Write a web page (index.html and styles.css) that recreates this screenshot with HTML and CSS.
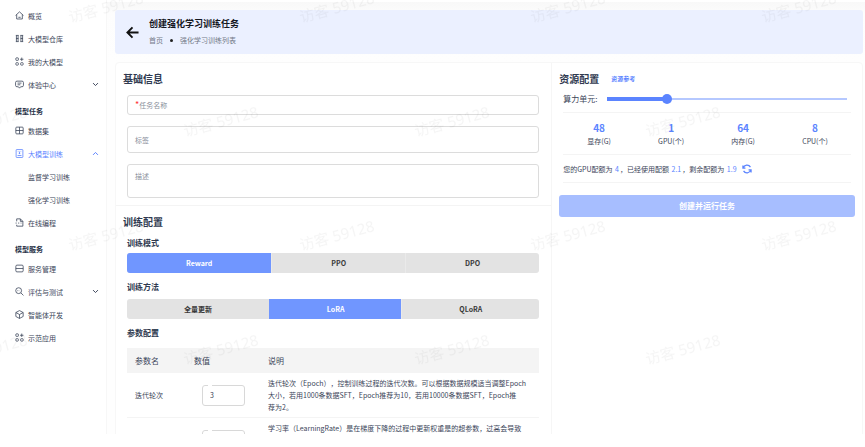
FILE: index.html
```html
<!DOCTYPE html>
<html lang="zh-CN">

<head>
  <meta charset="UTF-8">
  <meta name="viewport" content="width=device-width, initial-scale=1.0">
  <title>创建强化学习训练任务</title>
  <link rel="stylesheet" href="styles.css">
</head>

<body>
  <div class="app">
    <nav class="sidebar">
      <a class="nav-item" href="#">
        <svg class="icon" viewBox="0 0 16 16"><path d="M1 8 8 1.500l7 6.500M3 6.500V14.200h10V6.500M6 11.200h4"/></svg>
        <span>概览</span>
      </a>
      <a class="nav-item" href="#">
        <svg class="icon" viewBox="0 0 16 16"><path d="M1.500 2.500h5M1.500 13.500h5M9.500 2.500h5M9.500 13.500h5M2 8h4M10 8h4M2.500 2.500v11M5.500 2.500v11M10.500 2.500v11M13.500 2.500v11"/></svg>
        <span>大模型仓库</span>
      </a>
      <a class="nav-item" href="#">
        <svg class="icon" viewBox="0 0 16 16"><rect x="1.500" y="1.500" width="4.500" height="4.500" rx="1"/><rect x="1.500" y="10" width="4.500" height="4.500" rx="1.500"/><rect x="10" y="10" width="4.500" height="4.500" rx="1.500"/><path d="M12 1v6M9 4h6"/></svg>
        <span>我的大模型</span>
      </a>
      <a class="nav-item" href="#">
        <svg class="icon" viewBox="0 0 16 16"><path d="M3.500 2h9A2.500 2.500 0 0 1 15 4.500v5a2.500 2.500 0 0 1-2.500 2.500H10l-2 2.500L6 12H3.500A2.500 2.500 0 0 1 1 9.500v-5A2.500 2.500 0 0 1 3.500 2zM4.500 5.500h7M4.500 8.500h5"/></svg>
        <span>体验中心</span>
        <svg class="chevron" viewBox="0 0 10 10"><path d="M1.500 3 5 6.500 8.500 3"/></svg>
      </a>

      <div class="nav-group">模型任务</div>
      <a class="nav-item" href="#">
        <svg class="icon" viewBox="0 0 16 16"><rect x="1.500" y="2" width="13" height="12" rx="1.500"/><path d="M8 2v12M1.500 8h13"/></svg>
        <span>数据集</span>
      </a>
      <a class="nav-item active" href="#">
        <svg class="icon" viewBox="0 0 16 16"><rect x="2" y="1" width="12" height="14" rx="1"/><path d="M5 4.500h1M10 4.500h1M8 4.500v4M6.500 7 8 8.500 9.500 7M4.500 11.500h7"/></svg>
        <span>大模型训练</span>
        <svg class="chevron" viewBox="0 0 10 10"><path d="M1.500 7 5 3.500 8.500 7"/></svg>
      </a>
      <a class="nav-item sub" href="#">监督学习训练</a>
      <a class="nav-item sub" href="#">强化学习训练</a>
      <a class="nav-item" href="#">
        <svg class="icon" viewBox="0 0 16 16"><path d="M3 6V1.500h6.500L14 6v8.500H3V12M9.500 1.500V6H14M1 9h2M5.500 9h2M10 9h1.500"/></svg>
        <span>在线编程</span>
      </a>

      <div class="nav-group">模型服务</div>
      <a class="nav-item" href="#">
        <svg class="icon" viewBox="0 0 16 16"><rect x="1.500" y="2" width="13" height="12" rx="2"/><path d="M1.500 8h13"/></svg>
        <span>服务管理</span>
      </a>
      <a class="nav-item" href="#">
        <svg class="icon" viewBox="0 0 16 16"><circle cx="6.500" cy="6.500" r="5.200"/><path d="m10.500 10.500 4.500 4.500M4 6.500h1M6.500 6.500h.5M8.500 6.500h.5"/></svg>
        <span>评估与测试</span>
        <svg class="chevron" viewBox="0 0 10 10"><path d="M1.500 3 5 6.500 8.500 3"/></svg>
      </a>
      <a class="nav-item" href="#">
        <svg class="icon" viewBox="0 0 16 16"><path d="m8 1 6.500 3.500v7L8 15l-6.500-3.500v-7zM1.500 4.500 8 8l6.500-3.500M8 8v7"/></svg>
        <span>智能体开发</span>
      </a>
      <a class="nav-item" href="#">
        <svg class="icon" viewBox="0 0 16 16"><rect x="1.500" y="1.500" width="4.500" height="4.500" rx="1"/><rect x="1.500" y="10" width="4.500" height="4.500" rx="1.500"/><rect x="10" y="10" width="4.500" height="4.500" rx="1.500"/><path d="M12 1v6M9 4h6"/></svg>
        <span>示范应用</span>
      </a>
    </nav>

    <main class="main">
      <header class="page-header">
        <a class="back" href="#" aria-label="返回">
          <svg viewBox="0 0 14 14"><path d="M13.500 7H1.500M7 1.500 1.500 7 7 12.500"/></svg>
        </a>
        <div>
          <h1>创建强化学习训练任务</h1>
          <div class="breadcrumb">
            <a href="#">首页</a>
            <span class="dot"></span>
            <a href="#">强化学习训练列表</a>
          </div>
        </div>
      </header>

      <div class="content">
        <form class="column">
          <section class="section">
            <h2>基础信息</h2>
            <div class="fields">
              <div class="field">
                <label for="taskName"><span class="required">*</span>任务名称</label>
                <input type="text" id="taskName" required>
              </div>
              <div class="field tall">
                <label for="tag">标签</label>
                <input type="text" id="tag">
              </div>
              <div class="field area">
                <label for="desc">描述</label>
                <textarea id="desc"></textarea>
              </div>
            </div>
          </section>

          <section class="section">
            <h2>训练配置</h2>
            <h3>训练模式</h3>
            <div class="segmented">
              <button type="button" class="selected">Reward</button>
              <button type="button">PPO</button>
              <button type="button">DPO</button>
            </div>
            <h3>训练方法</h3>
            <div class="segmented">
              <button type="button">全量更新</button>
              <button type="button" class="selected">LoRA</button>
              <button type="button">QLoRA</button>
            </div>
            <h3>参数配置</h3>
            <table class="params">
              <thead>
                <tr>
                  <th class="col-name">参数名</th>
                  <th class="col-value">数值</th>
                  <th>说明</th>
                </tr>
              </thead>
              <tbody>
                <tr>
                  <td><label for="epoch">迭代轮次</label></td>
                  <td>
                    <fieldset class="outlined">
                      <legend></legend>
                      <input type="text" id="epoch" value="3">
                    </fieldset>
                  </td>
                  <td>迭代轮次（Epoch），控制训练过程的迭代次数。可以根据数据规模适当调整Epoch<br>大小，若用1000条数据SFT，Epoch推荐为10，若用10000条数据SFT，Epoch推<br>荐为2。</td>
                </tr>
                <tr>
                  <td><label for="lr">学习率</label></td>
                  <td>
                    <fieldset class="outlined">
                      <legend></legend>
                      <input type="text" id="lr" value="0.0001">
                    </fieldset>
                  </td>
                  <td>学习率（LearningRate）是在梯度下降的过程中更新权重是的超参数，过高会导致<br>模型难以收敛，过低则会导致模型收敛速度过慢，平台已给出默认推荐值，<br>可根据经验进行调整。</td>
                </tr>
              </tbody>
            </table>
          </section>
        </form>

        <aside class="column resources">
          <div class="resource-title">
            <h2>资源配置</h2>
            <a href="#">资源参考</a>
          </div>
          <div class="resource-body">
            <div class="slider-row">
              <label for="units">算力单元:</label>
              <input type="range" id="units" min="0" max="100" value="24">
            </div>
            <div class="stats">
              <div><strong>48</strong><span>显存(G)</span></div>
              <div><strong>1</strong><span>GPU(个)</span></div>
              <div><strong>64</strong><span>内存(G)</span></div>
              <div><strong>8</strong><span>CPU(个)</span></div>
            </div>
            <div class="quota">
              <span>您的GPU配额为 <b>4</b>，已经使用配额 <b>2.1</b>，剩余配额为 <b>1.9</b></span>
              <button type="button" class="refresh" aria-label="刷新">
                <svg viewBox="0 0 16 16"><path d="M2 6.500A6.300 6.300 0 0 1 13.500 5M14 9.500A6.300 6.300 0 0 1 2.500 11M1.500 2.500v4.200h4M14.500 13.500V9.300h-4"/></svg>
              </button>
            </div>
          </div>
          <button type="button" class="submit">创建并运行任务</button>
        </aside>
      </div>
    </main>

    <svg class="watermark" aria-hidden="true">
      <defs>
        <pattern id="mark" width="231" height="228" patternUnits="userSpaceOnUse" x="-10" y="-49">
          <text x="116" y="62" transform="rotate(-15 116 57)">访客 59128</text>
          <text x="0" y="176" transform="rotate(-15 0 171)">访客 59128</text>
          <text x="231" y="176" transform="rotate(-15 231 171)">访客 59128</text>
        </pattern>
      </defs>
      <rect width="100%" height="100%" fill="url(#mark)"/>
    </svg>
  </div>
</body>

</html>
```
FILE: styles.css
```css
* {
  box-sizing: border-box;
}

body {
  margin: 0;
  font-family: "Noto Sans CJK SC", sans-serif;
  font-size: 7px;
  line-height: 12px;
  text-spacing-trim: space-all;
  color: #3b4559;
  background-color: #fff;
}

h1, h2, h3 {
  margin: 0;
}

a {
  color: inherit;
  text-decoration: none;
}

button,
input,
textarea {
  font: inherit;
  color: inherit;
}

.app {
  position: relative;
  display: flex;
  height: calc(100vh - 13px);
  overflow: hidden;
}

/* sidebar */
.sidebar {
  width: 107px;
  flex: none;
  padding-top: 4px;
  border-right: 1px solid #f7f7f7;
}

.nav-item {
  display: flex;
  align-items: center;
  gap: 4px;
  height: 23px;
  padding: 0 7px 0 15px;
}

.nav-item.sub {
  padding-left: 28px;
}

.nav-item.active {
  color: #5b82ff;
}

.nav-group {
  height: 23px;
  padding: 9px 0 0 15px;
  font-weight: bold;
  color: #273248;
}

.icon {
  width: 9px;
  height: 9px;
}

.icon,
.chevron {
  fill: none;
  stroke: currentColor;
  stroke-width: 1.4;
}

.chevron {
  width: 7px;
  height: 7px;
  margin-left: auto;
}

/* page */
.main {
  flex: 1;
  min-width: 0;
  padding: 8px 2px 0 8px;
  border-top: 2px solid #fff;
  background: linear-gradient(#f8f8f8, #fdfdfd 12px, #fefefe 60px);
}

.page-header {
  display: flex;
  align-items: center;
  gap: 10px;
  height: 44px;
  padding: 0 11px;
  border-radius: 3px;
  background-color: #ebf0ff;
}

.back svg {
  display: block;
  width: 13px;
  height: 13px;
  fill: none;
  stroke: #111;
  stroke-width: 2;
}

.page-header h1 {
  font-size: 9px;
  line-height: 16px;
  color: #15181f;
}

.breadcrumb {
  display: flex;
  align-items: center;
  gap: 7px;
  line-height: 16px;
  color: #737a87;
}

.dot {
  width: 3px;
  height: 3px;
  border-radius: 50%;
  background-color: #222;
}

.content {
  display: grid;
  grid-template-columns: 7fr 5fr;
  height: 100%;
  margin-top: 8px;
  border: 1px solid #f7f7f7;
  border-radius: 4px;
  background-color: #fff;
}

h2 {
  font-size: 10px;
  line-height: 16px;
  color: #2f3a50;
}

/* form */
.section {
  padding: 8px 12px 7px 11px;
  border-bottom: 1px solid #f4f4f4;
}

.section h2 {
  margin-left: -4px;
}

.fields {
  display: grid;
  gap: 11px;
  margin-top: 8px;
}

.field {
  display: flex;
  align-items: center;
  height: 20px;
  padding: 0 7px;
  border: 1px solid #dcdcdc;
  border-radius: 3px;
}

.field.tall {
  height: 27px;
}

.field.area {
  align-items: flex-start;
  height: 34px;
  padding-top: 5px;
}

.field label {
  flex: none;
  color: #8a909c;
}

.field input,
.field textarea {
  flex: 1;
  min-width: 0;
  height: 100%;
  padding: 0 4px;
  border: none;
  outline: none;
  resize: none;
  background: none;
}

.required {
  font-size: 9px;
  color: #f33;
}

h3 {
  margin: 7px 0 5px;
  font-size: 8px;
  line-height: 14px;
  color: #2f3a50;
}

h2 + h3 {
  margin: 6px 0 3px;
}

.segmented {
  display: flex;
  height: 20px;
  overflow: hidden;
  border-radius: 3px;
  background-color: #e3e3e3;
}

.segmented button {
  flex: 1 1 auto;
  padding: 0;
  border: none;
  border-left: 1px solid #eaeaea;
  background: none;
  font-weight: bold;
  color: #3a3a3a;
  cursor: pointer;
}

.segmented button:first-child {
  border-left: none;
}

.segmented .selected {
  border-color: #7096ff;
  background-color: #7096ff;
  color: #fff;
}

.params {
  width: 100%;
  margin-top: 8px;
  border-collapse: collapse;
  table-layout: fixed;
}

.params th {
  height: 25px;
  padding: 0 0 0 8px;
  background-color: #f4f4f4;
  font-size: 8px;
  font-weight: normal;
  text-align: left;
}

.params .col-name {
  width: 59px;
}

.params .col-value {
  width: 74px;
}

.params td {
  padding: 4px 8px;
  border-bottom: 1px solid #f4f4f4;
}

.params td:nth-child(2) {
  padding: 4px 15px 4px 16px;
}

.params td:last-child {
  padding-right: 5px;
}

/* border stays open above the value */
.outlined {
  min-width: 0;
  height: 21px;
  margin: 0;
  padding: 0 7px;
  border: 1px solid #d8d8d8;
  border-radius: 3px;
}

.outlined legend {
  width: 4px;
  height: 1px;
  margin-left: -2px;
  padding: 0;
}

.outlined input {
  display: block;
  width: 100%;
  height: 19px;
  padding: 0;
  border: none;
  outline: none;
  background: none;
}

/* resources */
.resources {
  padding: 8px 7px;
  border-left: 1px solid #f6f6f6;
}

.resource-title {
  display: flex;
  align-items: center;
  gap: 12px;
}

.resource-title a {
  font-size: 6px;
  font-weight: bold;
  color: #5b84ff;
}

.resource-body {
  margin: 0 4px;
}

.slider-row {
  display: flex;
  align-items: center;
  gap: 10px;
  height: 26px;
  padding: 0 4px 2px 0;
  border-bottom: 1px solid #f4f4f4;
}

.slider-row label {
  flex: none;
  font-size: 8px;
}

.slider-row input {
  flex: 1;
  min-width: 0;
  height: 10px;
  margin: 0;
  appearance: none;
  background:
    linear-gradient(#5b84ff, #5b84ff) 0 50% / 24% 4px no-repeat,
    linear-gradient(#b5c8ff, #b5c8ff) 0 50% / 100% 2px no-repeat;
}

.slider-row input::-webkit-slider-thumb {
  width: 10px;
  height: 10px;
  appearance: none;
  border-radius: 50%;
  background-color: #5b84ff;
}

.stats {
  display: grid;
  grid-template-columns: repeat(4, 1fr);
  height: 42px;
  padding-top: 8px;
  border-bottom: 1px solid #f4f4f4;
  text-align: center;
}

.stats strong,
.stats span {
  display: block;
}

.stats strong {
  font-size: 10px;
  line-height: 14px;
  color: #5b84ff;
}

.quota {
  display: flex;
  align-items: center;
  gap: 4px;
  height: 28px;
  border-bottom: 1px solid #f4f4f4;
}

.quota b {
  margin: 0 1px;
  font-weight: normal;
  color: #5b84ff;
}

.refresh {
  padding: 0;
  border: none;
  background: none;
  cursor: pointer;
}

.refresh svg {
  display: block;
  width: 10px;
  height: 10px;
  fill: none;
  stroke: #5b84ff;
  stroke-width: 2;
}

.submit {
  width: 100%;
  height: 22px;
  margin-top: 12px;
  padding: 0;
  border: none;
  border-radius: 3px;
  background-color: #a7beff;
  font-size: 8px;
  font-weight: bold;
  color: #fff;
}

/* watermark lies over the whole page */
.watermark {
  position: absolute;
  inset: 0;
  width: 100%;
  height: 100%;
  pointer-events: none;
}

.watermark text {
  font-family: "Noto Sans", "Noto Sans CJK SC", sans-serif;
  font-size: 15px;
  text-anchor: middle;
  fill: #000;
  fill-opacity: 0.04;
}
```
